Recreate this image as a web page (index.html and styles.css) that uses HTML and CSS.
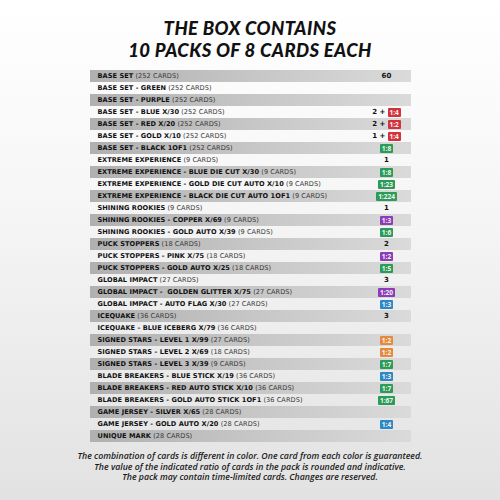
FILE: index.html
```html
<!DOCTYPE html>
<html>
<head>
<meta charset="utf-8">
<link rel="stylesheet" href="styles.css">
</head>
<body>
<div class="page">
  <h1 class="title"><span class="tl">THE BOX CONTAINS</span><span class="tl">10 PACKS OF 8 CARDS EACH</span></h1>
  <div class="table">
    <div class="row g"><span class="name"><b>BASE SET</b> (252 CARDS)</span><span class="val">60</span></div>
    <div class="row"><span class="name"><b>BASE SET - GREEN</b> (252 CARDS)</span><span class="val"></span></div>
    <div class="row g"><span class="name"><b>BASE SET - PURPLE</b> (252 CARDS)</span><span class="val"></span></div>
    <div class="row"><span class="name"><b>BASE SET - BLUE X/30</b> (252 CARDS)</span><span class="val">2 + <i class="bd red">1:4</i></span></div>
    <div class="row g"><span class="name"><b>BASE SET - RED X/20</b> (252 CARDS)</span><span class="val">2 + <i class="bd red">1:2</i></span></div>
    <div class="row"><span class="name"><b>BASE SET - GOLD X/10</b> (252 CARDS)</span><span class="val">1 + <i class="bd red">1:4</i></span></div>
    <div class="row g"><span class="name"><b>BASE SET - BLACK 1OF1</b> (252 CARDS)</span><span class="val"><i class="bd green">1:8</i></span></div>
    <div class="row"><span class="name"><b>EXTREME EXPERIENCE</b> (9 CARDS)</span><span class="val">1</span></div>
    <div class="row g"><span class="name"><b>EXTREME EXPERIENCE - BLUE DIE CUT X/30</b> (9 CARDS)</span><span class="val"><i class="bd green">1:8</i></span></div>
    <div class="row"><span class="name"><b>EXTREME EXPERIENCE - GOLD DIE CUT AUTO X/10</b> (9 CARDS)</span><span class="val"><i class="bd green">1:23</i></span></div>
    <div class="row g"><span class="name"><b>EXTREME EXPERIENCE - BLACK DIE CUT AUTO 1OF1</b> (9 CARDS)</span><span class="val"><i class="bd green">1:224</i></span></div>
    <div class="row"><span class="name"><b>SHINING ROOKIES</b> (9 CARDS)</span><span class="val">1</span></div>
    <div class="row g"><span class="name"><b>SHINING ROOKIES - COPPER X/69</b> (9 CARDS)</span><span class="val"><i class="bd purple">1:3</i></span></div>
    <div class="row"><span class="name"><b>SHINING ROOKIES - GOLD AUTO X/39</b> (9 CARDS)</span><span class="val"><i class="bd green">1:6</i></span></div>
    <div class="row g"><span class="name"><b>PUCK STOPPERS</b> (18 CARDS)</span><span class="val">2</span></div>
    <div class="row"><span class="name"><b>PUCK STOPPERS - PINK X/75</b> (18 CARDS)</span><span class="val"><i class="bd purple">1:2</i></span></div>
    <div class="row g"><span class="name"><b>PUCK STOPPERS - GOLD AUTO X/25</b> (18 CARDS)</span><span class="val"><i class="bd green">1:5</i></span></div>
    <div class="row"><span class="name"><b>GLOBAL IMPACT</b> (27 CARDS)</span><span class="val">3</span></div>
    <div class="row g"><span class="name"><b>GLOBAL IMPACT - &nbsp;GOLDEN GLITTER X/75</b> (27 CARDS)</span><span class="val"><i class="bd purple">1:20</i></span></div>
    <div class="row"><span class="name"><b>GLOBAL IMPACT - AUTO FLAG X/30</b> (27 CARDS)</span><span class="val"><i class="bd blue">1:3</i></span></div>
    <div class="row g"><span class="name"><b>ICEQUAKE</b> (36 CARDS)</span><span class="val">3</span></div>
    <div class="row"><span class="name"><b>ICEQUAKE - BLUE ICEBERG X/79</b> (36 CARDS)</span><span class="val"></span></div>
    <div class="row g"><span class="name"><b>SIGNED STARS - LEVEL 1 X/99</b> (27 CARDS)</span><span class="val"><i class="bd orange">1:2</i></span></div>
    <div class="row"><span class="name"><b>SIGNED STARS - LEVEL 2 X/69</b> (18 CARDS)</span><span class="val"><i class="bd orange">1:2</i></span></div>
    <div class="row g"><span class="name"><b>SIGNED STARS - LEVEL 3 X/39</b> (9 CARDS)</span><span class="val"><i class="bd green">1:7</i></span></div>
    <div class="row"><span class="name"><b>BLADE BREAKERS - BLUE STICK X/19</b> (36 CARDS)</span><span class="val"><i class="bd blue">1:3</i></span></div>
    <div class="row g"><span class="name"><b>BLADE BREAKERS - RED AUTO STICK X/10</b> (36 CARDS)</span><span class="val"><i class="bd green">1:7</i></span></div>
    <div class="row"><span class="name"><b>BLADE BREAKERS - GOLD AUTO STICK 1OF1</b> (36 CARDS)</span><span class="val"><i class="bd green">1:67</i></span></div>
    <div class="row g"><span class="name"><b>GAME JERSEY - SILVER X/65</b> (28 CARDS)</span><span class="val"></span></div>
    <div class="row"><span class="name"><b>GAME JERSEY - GOLD AUTO X/20</b> (28 CARDS)</span><span class="val"><i class="bd blue">1:4</i></span></div>
    <div class="row g"><span class="name"><b>UNIQUE MARK</b> (28 CARDS)</span><span class="val"></span></div>
  </div>
  <p class="note">The combination of cards is different in color. One card from each color is guaranteed.<br>The value of the indicated ratio of cards in the pack is rounded and indicative.<br>The pack may contain time-limited cards. Changes are reserved.</p>
</div>
</body>
</html>
```
FILE: styles.css
```css
html, body {
  margin: 0;
  padding: 0;
}
body {
  width: 500px;
  height: 500px;
  background: linear-gradient(to bottom, #ffffff 0%, #f6f6f6 40%, #e2e2e2 100%);
  font-family: "Open Sans", "Liberation Sans", sans-serif;
  overflow: hidden;
}
.page {
  display: flex;
  flex-direction: column;
  align-items: center;
  padding-top: 17px;
}
.title {
  margin: 0;
  display: flex;
  flex-direction: column;
  align-items: center;
  font-family: "Lato", "Open Sans", sans-serif;
  font-weight: 900;
  font-style: italic;
  font-size: 18.5px;
  color: #111;
  letter-spacing: 0.4px;
}
.tl {
  display: block;
  height: 22px;
  line-height: 22.2px;
}
.table {
  margin-top: 9px;
  width: 321px;
  display: flex;
  flex-direction: column;
}
.row {
  height: 12px;
  display: flex;
  align-items: center;
  justify-content: space-between;
  padding: 0 6px 0 8px;
  font-family: "DejaVu Sans", sans-serif;
  font-size: 6.6px;
  letter-spacing: 0.05px;
  color: #111;
}
.row.g {
  background: linear-gradient(to right, #b0b0b0 0%, #c6c6c6 50%, #dadada 100%);
}
.name {
  white-space: nowrap;
  color: #383838;
}
.name b {
  font-weight: 700;
  color: #111;
}
.val {
  width: 40px;
  font-weight: 700;
  font-size: 7px;
  white-space: nowrap;
  display: flex;
  justify-content: center;
  align-items: center;
  gap: 2px;
  margin-right: -2px;
}
.bd {
  font-family: "Open Sans", sans-serif;
  font-style: normal;
  font-weight: 700;
  font-size: 6.5px;
  letter-spacing: 0;
  color: #f4f4f4;
  padding: 0 2px;
  line-height: 9px;
  height: 9px;
  border-radius: 1px;
}
.red { background: #d3323c; }
.green { background: #2b9b58; }
.purple { background: #8c3db8; }
.blue { background: #2d88c4; }
.orange { background: #e48a3e; }
.note {
  margin: 9px 0 0;
  font-family: "Open Sans", sans-serif;
  font-style: italic;
  font-weight: 600;
  font-size: 8.75px;
  line-height: 10.6px;
  text-align: center;
  color: #1a1a1a;
}
```
